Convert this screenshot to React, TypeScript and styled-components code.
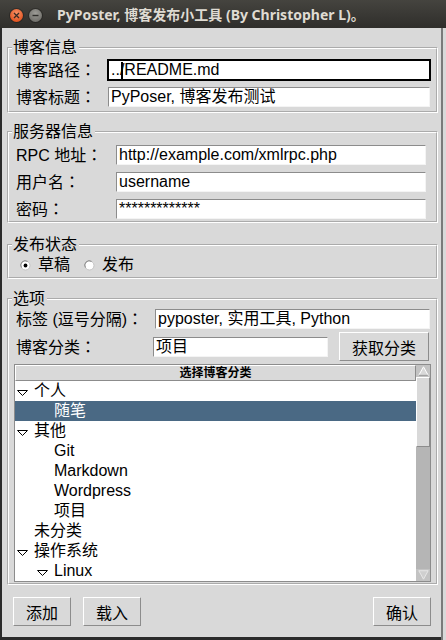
import React from "react"
import styled, { createGlobalStyle } from "styled-components"

type Category = {
    name: string
    depth: number
    open?: boolean
    selected?: boolean
}

const categories: Category[] = [
    { name: "个人", depth: 0, open: true },
    { name: "随笔", depth: 1, selected: true },
    { name: "其他", depth: 0, open: true },
    { name: "Git", depth: 1 },
    { name: "Markdown", depth: 1 },
    { name: "Wordpress", depth: 1 },
    { name: "项目", depth: 1 },
    { name: "未分类", depth: 0 },
    { name: "操作系统", depth: 0, open: true },
    { name: "Linux", depth: 1, open: true },
]

const GlobalStyle = createGlobalStyle`
    html, body {
        margin: 0;
        padding: 0;
        background: #2b2b2b;
    }
    body {
        width: 446px;
        height: 640px;
        overflow: hidden;
        font-family: "Liberation Sans", "Noto Sans CJK SC", sans-serif;
    }
`

const Screen = styled.div`
    width: 446px;
    height: 640px;
    display: flex;
    flex-direction: column;
`

const TitleBar = styled.div`
    height: 28px;
    flex: none;
    display: flex;
    align-items: center;
    padding-left: 10px;
    background: linear-gradient(#45443f, #2f2e2b);
`

const WinButton = styled.span<{ $kind: "close" | "min" }>`
    width: 13px;
    height: 13px;
    margin: 2px 6px 0 0;
    border-radius: 50%;
    display: flex;
    align-items: center;
    justify-content: center;
    background: ${(p) =>
        p.$kind === "close"
            ? "radial-gradient(circle at 50% 35%, #f8946a, #e2531f 75%)"
            : "radial-gradient(circle at 50% 35%, #9d9c97, #71706b 75%)"};
    box-shadow: 0 0 0 1px rgba(0, 0, 0, 0.25);
`

const Title = styled.span`
    margin-left: 9px;
    font-family: "Noto Sans", "Noto Sans CJK SC", sans-serif;
    font-weight: bold;
    font-size: 14px;
    color: #dfdbd2;
    white-space: nowrap;
`

const Body = styled.div`
    flex: 1;
    display: flex;
    min-height: 0;
`

const Window = styled.div`
    width: 441px;
    flex: none;
    box-sizing: border-box;
    border-left: 2px solid #2b2b2b;
    border-bottom: 3px solid #2b2b2b;
    background: #d9d9d9;
    display: flex;
    flex-direction: column;
    font-size: 16px;
    color: #000;
`

const Backdrop = styled.div`
    flex: 1;
    background: #d9d9d9;
    border-left: 2px solid #7a7a7a;
`

const Group = styled.fieldset<{ $mt: number; $pt: number; $pb: number }>`
    margin: ${(p) => p.$mt}px 3px 0 5px;
    padding: ${(p) => p.$pt}px 5px ${(p) => p.$pb}px 7px;
    border: 2px groove #ffffff;
    min-width: 0;
`

const Legend = styled.legend`
    margin-left: -4px;
    padding: 0 2px 0 1px;
    font-size: 16px;
    line-height: 18px;
`

const Stack = styled.div<{ $gap: number }>`
    display: flex;
    flex-direction: column;
    gap: ${(p) => p.$gap}px;
`

const Row = styled.div`
    display: flex;
    align-items: center;
`

const Label = styled.span<{ $w: number }>`
    width: ${(p) => p.$w}px;
    flex: none;
    line-height: 20px;
    white-space: nowrap;
`

// full-width colon drawn centred, as the Tk font does
const Colon = styled.span`
    font-family: "Noto Sans CJK TC", sans-serif;
`

const Field = styled.div<{ $w?: number; $focused?: boolean }>`
    margin: 1px;
    height: 20px;
    box-sizing: border-box;
    ${(p) => (p.$w ? `width: ${p.$w}px; flex: none;` : "flex: 1;")}
    padding: 0 2px;
    border: 1px solid;
    border-color: ${(p) => (p.$focused ? "#000" : "#8c8c8c #f4f4f4 #f4f4f4 #8c8c8c")};
    box-shadow: ${(p) => (p.$focused ? "0 0 0 1px #000" : "none")};
    background: #fff;
    line-height: 18px;
    white-space: nowrap;
    overflow: hidden;
`

const Slash = styled.span`
    position: relative;
    &::after {
        content: "";
        position: absolute;
        left: 1px;
        top: 1px;
        bottom: -1px;
        width: 2px;
        background: #000;
    }
`

const Button = styled.button<{ $w: number }>`
    width: ${(p) => p.$w}px;
    height: 29px;
    margin: 1px;
    flex: none;
    box-sizing: border-box;
    padding: 0;
    border: 1px solid;
    border-color: #ffffff #8c8c8c #8c8c8c #ffffff;
    background: #d9d9d9;
    color: #000;
    font-family: "Liberation Sans", "Noto Sans CJK SC", sans-serif;
    font-size: 16px;
`

const RadioRow = styled.div`
    height: 22px;
    display: flex;
    align-items: center;
    gap: 14px;
    padding-left: 4px;
`

const Radio = styled.label`
    display: flex;
    align-items: center;
    gap: 7px;
    line-height: 20px;
`

const Tree = styled.div`
    margin: 2px 0 0 -2px;
    height: 218px;
    box-sizing: border-box;
    border: 1px solid #8c8c8c;
    background: #fff;
    display: flex;
`

const TreeMain = styled.div`
    flex: 1;
    display: flex;
    flex-direction: column;
    overflow: hidden;
`

const TreeHeader = styled.div`
    height: 16px;
    flex: none;
    box-sizing: border-box;
    border: 1px solid;
    border-color: #ffffff #8c8c8c #8c8c8c #ffffff;
    background: #d9d9d9;
    font-weight: bold;
    font-size: 12px;
    line-height: 14px;
    text-align: center;
`

const TreeRow = styled.div<{ $depth: number; $selected?: boolean }>`
    height: 20px;
    flex: none;
    display: flex;
    align-items: center;
    padding-left: ${(p) => 2 + p.$depth * 20}px;
    background: ${(p) => (p.$selected ? "#4a6984" : "transparent")};
    color: ${(p) => (p.$selected ? "#ffffff" : "#000")};
    line-height: 20px;
    white-space: nowrap;
`

const Toggle = styled.span`
    width: 17px;
    height: 20px;
    flex: none;
    display: flex;
    align-items: center;
    padding-top: 3px;
    box-sizing: border-box;
`

const ScrollBar = styled.div`
    width: 14px;
    flex: none;
    display: flex;
    flex-direction: column;
    background: #b5b5b5;
`

const Arrow = styled.div`
    height: 12px;
    flex: none;
    display: flex;
    align-items: center;
    justify-content: center;
    background: #c3c3c3;
`

const Thumb = styled.div<{ $h: number }>`
    height: ${(p) => p.$h}px;
    flex: none;
    box-sizing: border-box;
    border: 1px solid;
    border-color: #ffffff #8c8c8c #8c8c8c #ffffff;
    background: #d9d9d9;
`

const Trough = styled.div`
    flex: 1;
`

const ButtonBar = styled.div`
    display: flex;
    padding: 11px 9px 0 10px;
    gap: 10px;
    & > :last-child {
        margin-left: auto;
    }
`

const RadioMark = ({ checked }: { checked?: boolean }) => (
    <svg width="11" height="11" viewBox="0 0 11 11">
        <circle cx="5.5" cy="5.5" r="4.5" fill="#fff" stroke="#c4c4c4" strokeWidth="1" />
        <path d="M1.4 7.6 A4.5 4.5 0 0 1 7.6 1.4" fill="none" stroke="#8a8a8a" strokeWidth="1" />
        {checked && <circle cx="5.5" cy="5.5" r="1.9" fill="#000" />}
    </svg>
)

const OpenMark = () => (
    <svg width="11" height="6" viewBox="0 0 11 6">
        <path d="M0.5 0.5 H10.5 L5.5 5.5 Z" fill="#fff" stroke="#000" strokeWidth="1" />
    </svg>
)

const App: React.FC = () => {
    return (
        <Screen>
            <GlobalStyle />
            <TitleBar>
                <WinButton $kind="close">
                    <svg width="7" height="7" viewBox="0 0 7 7">
                        <path d="M1 1 L6 6 M6 1 L1 6" stroke="#3a2a22" strokeWidth="1.3" />
                    </svg>
                </WinButton>
                <WinButton $kind="min">
                    <svg width="7" height="7" viewBox="0 0 7 7">
                        <path d="M0.5 3.5 H6.5" stroke="#2f2e2b" strokeWidth="1.4" />
                    </svg>
                </WinButton>
                <Title>PyPoster, 博客发布小工具 (By Christopher L)。</Title>
            </TitleBar>
            <Body>
                <Window>
                    <Group $mt={11} $pt={2} $pb={3}>
                        <Legend>博客信息</Legend>
                        <Stack $gap={5}>
                            <Row>
                                <Label $w={91}>
                                    博客路径<Colon>：</Colon>
                                </Label>
                                <Field $focused>
                                    ..<Slash>/</Slash>README.md
                                </Field>
                            </Row>
                            <Row>
                                <Label $w={91}>
                                    博客标题<Colon>：</Colon>
                                </Label>
                                <Field>PyPoser, 博客发布测试</Field>
                            </Row>
                        </Stack>
                    </Group>

                    <Group $mt={10} $pt={3} $pb={1}>
                        <Legend>服务器信息</Legend>
                        <Stack $gap={5}>
                            <Row>
                                <Label $w={99}>
                                    RPC 地址<Colon>：</Colon>
                                </Label>
                                <Field $w={310}>http://example.com/xmlrpc.php</Field>
                            </Row>
                            <Row>
                                <Label $w={99}>
                                    用户名<Colon>：</Colon>
                                </Label>
                                <Field $w={310}>username</Field>
                            </Row>
                            <Row>
                                <Label $w={99}>
                                    密码<Colon>：</Colon>
                                </Label>
                                <Field $w={310}>*************</Field>
                            </Row>
                        </Stack>
                    </Group>

                    <Group $mt={13} $pt={0} $pb={1}>
                        <Legend>发布状态</Legend>
                        <RadioRow>
                            <Radio>
                                <RadioMark checked />
                                草稿
                            </Radio>
                            <Radio>
                                <RadioMark />
                                发布
                            </Radio>
                        </RadioRow>
                    </Group>

                    <Group $mt={11} $pt={0} $pb={1}>
                        <Legend>选项</Legend>
                        <Stack $gap={1}>
                            <Row>
                                <Label $w={138}>
                                    标签 (逗号分隔)<Colon>：</Colon>
                                </Label>
                                <Field>pyposter, 实用工具, Python</Field>
                            </Row>
                            <Row>
                                <Label $w={136}>
                                    博客分类<Colon>：</Colon>
                                </Label>
                                <Field $w={175}>项目</Field>
                                <Button $w={90} style={{ marginLeft: 10 }}>
                                    获取分类
                                </Button>
                            </Row>
                        </Stack>
                        <Tree>
                            <TreeMain>
                                <TreeHeader>选择博客分类</TreeHeader>
                                {categories.map((c) => (
                                    <TreeRow key={c.name} $depth={c.depth} $selected={c.selected}>
                                        <Toggle>{c.open && <OpenMark />}</Toggle>
                                        {c.name}
                                    </TreeRow>
                                ))}
                            </TreeMain>
                            <ScrollBar>
                                <Arrow>
                                    <svg width="11" height="10" viewBox="0 0 11 10">
                                        <path d="M5.5 0.8 L10.2 9.3 H0.8 Z" fill="#d9d9d9" stroke="#fff" strokeWidth="1" />
                                        <path d="M5.5 0.8 L10.2 9.3 H0.8" fill="none" stroke="#8c8c8c" strokeWidth="1" strokeDasharray="0 10 30" />
                                    </svg>
                                </Arrow>
                                <Thumb $h={70} />
                                <Trough />
                                <Arrow>
                                    <svg width="11" height="10" viewBox="0 0 11 10">
                                        <path d="M0.8 0.7 H10.2 L5.5 9.2 Z" fill="#cfcfcf" stroke="#e6e6e6" strokeWidth="1" />
                                    </svg>
                                </Arrow>
                            </ScrollBar>
                        </Tree>
                    </Group>

                    <ButtonBar>
                        <Button $w={58}>添加</Button>
                        <Button $w={58}>载入</Button>
                        <Button $w={58}>确认</Button>
                    </ButtonBar>
                </Window>
                <Backdrop />
            </Body>
        </Screen>
    )
}

export default App
